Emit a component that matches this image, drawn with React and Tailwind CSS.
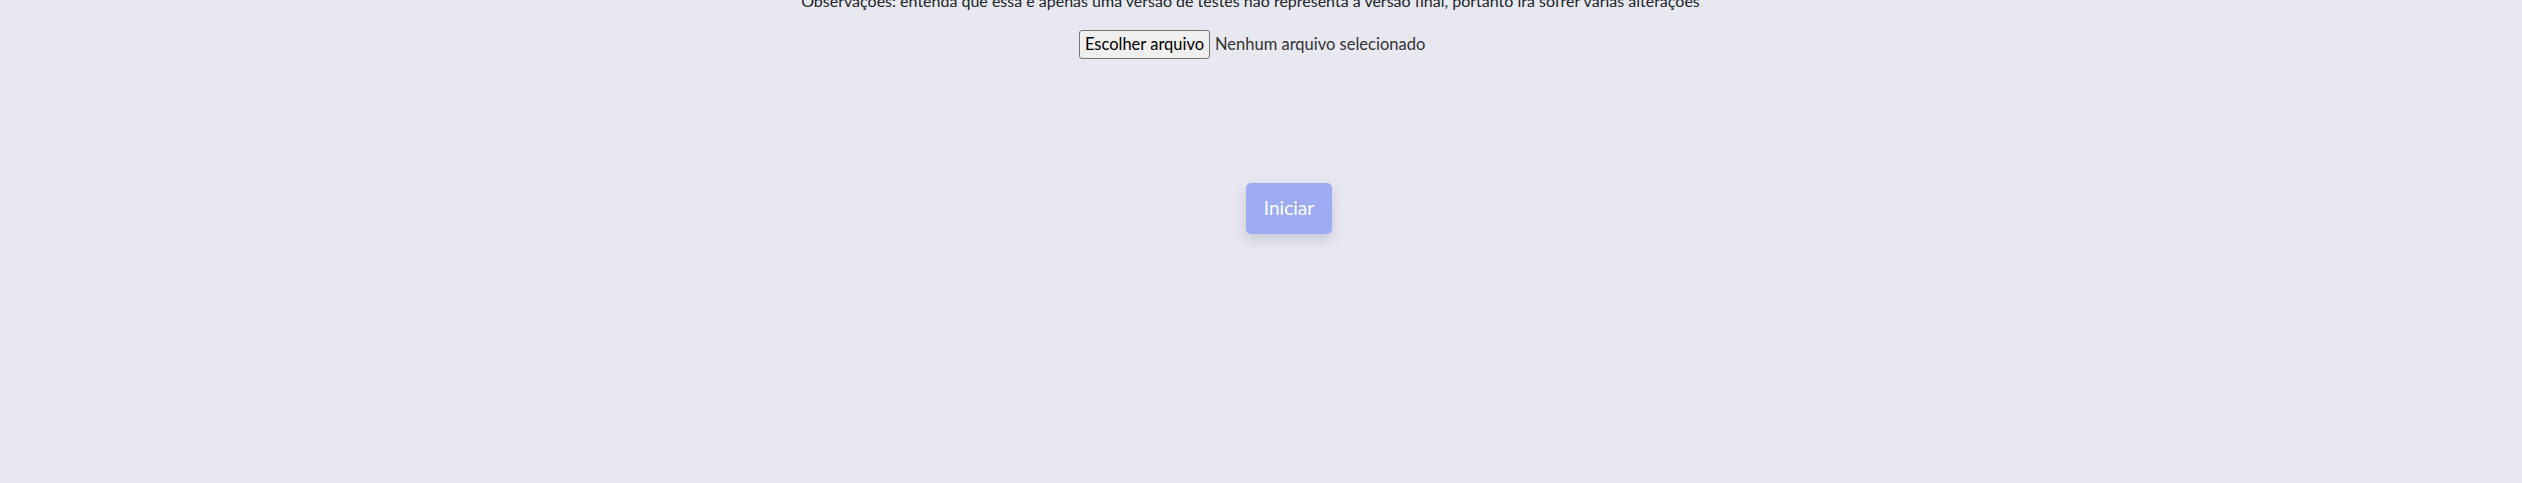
import React from "react";

function FilePicker() {
  return (
    <div className="flex w-[364px] items-center gap-[5px] text-[16.5px] leading-none text-[#202124]">
      <span className="flex h-[29px] w-[131px] items-center justify-center rounded-[3px] border border-[#767676] bg-[#efefef] text-black">
        Escolher arquivo
      </span>
      <span className="text-[#333]">Nenhum arquivo selecionado</span>
    </div>
  );
}

export default function App() {
  return (
    <div className="h-[483px] overflow-hidden bg-[#e8e8f1] font-['Lato','Liberation_Sans',sans-serif] text-[#212529]">
      <p className="-mt-[11px] pr-[21px] text-center text-[16px] leading-6">
        Observações: entenda que essa é apenas uma versão de testes não
        representa a versão final, portanto irá sofrer várias alterações
      </p>

      <div className="mt-[17px] flex justify-center">
        <FilePicker />
      </div>

      <div className="mt-[124px] flex justify-center pl-[56px]">
        <button
          type="button"
          className="h-[51px] rounded-[5px] bg-[#9dabf2] px-[18px] text-[19px] text-white shadow-[0_6px_14px_rgba(60,60,90,0.18)]"
        >
          Iniciar
        </button>
      </div>
    </div>
  );
}
